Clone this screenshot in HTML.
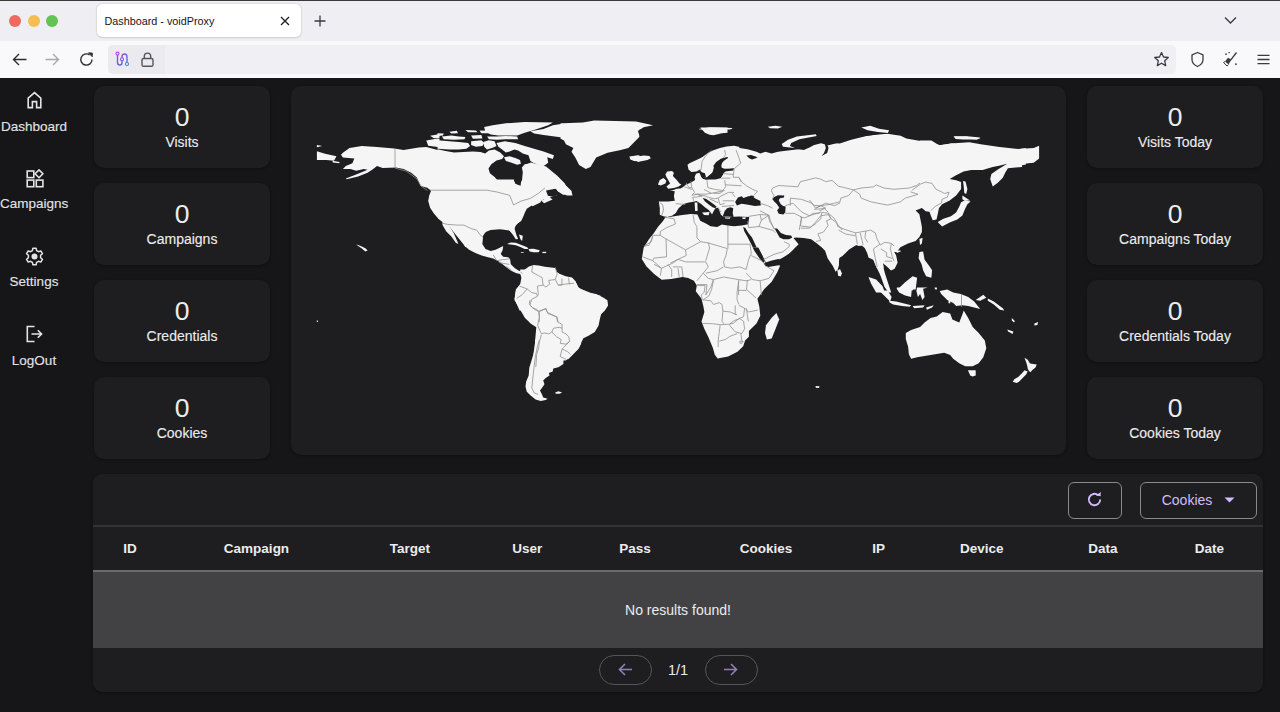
<!DOCTYPE html>
<html><head><meta charset="utf-8">
<style>
*{box-sizing:border-box;margin:0;padding:0}
html,body{width:1280px;height:712px;overflow:hidden;background:#161618;font-family:"Liberation Sans",sans-serif}
#chrome{position:absolute;left:0;top:0;width:1280px;height:78px;background:#f9f9fb}
#tabstrip{position:absolute;left:0;top:0;width:1280px;height:41px;background:#efeef3}
#topline{position:absolute;left:0;top:0;width:1280px;height:1px;background:#3a3a3a}
.dot{position:absolute;top:15px;width:12px;height:12px;border-radius:50%}
#tab{position:absolute;left:97px;top:4px;width:204px;height:33px;background:#fff;border-radius:5px;box-shadow:0 0 1.5px rgba(0,0,0,.3),0 1px 2px rgba(0,0,0,.08)}
#tab span{position:absolute;left:7.5px;top:11.2px;font-size:10.8px;line-height:13px;color:#15141a;white-space:nowrap}
#url{position:absolute;left:108px;top:45px;width:1068px;height:29px;background:#f0f0f4;border-radius:5px}
#urlbox{position:absolute;left:108px;top:45px;width:57px;height:29px;background:#ebebef;border-radius:5px 0 0 5px}
.ic{position:absolute}
.nav{-webkit-text-stroke:0.12px #e4e3e6;position:absolute;left:0;width:68px;height:16px;font-size:13.5px;line-height:16px;color:#e4e3e6;text-align:center;white-space:nowrap}
.card{position:absolute;width:176px;height:82px;background:#1e1e20;border-radius:10px;box-shadow:0 1px 3px rgba(0,0,0,.35);color:#ececee;text-align:center}
.card .n{position:absolute;left:0;right:0;top:102px;font-size:26.5px;line-height:30px}
.card .l{-webkit-text-stroke:0.12px #ececee;position:absolute;left:0;right:0;font-size:14px;line-height:16px;white-space:nowrap}
#map{position:absolute;left:291px;top:86px;width:775px;height:369px;background:#1e1e20;border-radius:10px;box-shadow:0 1px 3px rgba(0,0,0,.35)}
#tbl{position:absolute;left:93px;top:474px;width:1170px;height:218px;background:#1e1e20;border-radius:9px;box-shadow:0 1px 3px rgba(0,0,0,.35);overflow:hidden}
#div1{position:absolute;left:93px;top:525px;width:1170px;height:2px;background:#333237}
#div2{position:absolute;left:93px;top:570px;width:1170px;height:2px;background:#6b696e}
#row{position:absolute;left:93px;top:572px;width:1170px;height:76px;background:#424244}
.th{position:absolute;top:541px;height:16px;width:120px;margin-left:-60px;text-align:center;font-size:13.5px;line-height:16px;font-weight:bold;color:#ececee;white-space:nowrap}
.btn{position:absolute;border:1.3px solid #8b888f;border-radius:6px}
.pill{position:absolute;top:655px;width:53px;height:29.5px;border:1px solid #57545c;border-radius:15px}
</style></head><body>
<div id="chrome">
  <div id="tabstrip"></div>
  <div id="topline"></div>
  <div class="dot" style="left:9px;background:#ee6a5f"></div>
  <div class="dot" style="left:27.5px;background:#f5bd4f"></div>
  <div class="dot" style="left:46px;background:#61c454"></div>
  <div id="tab"><span>Dashboard - voidProxy</span>
    <svg class="ic" style="left:183px;top:12px" width="10" height="10" viewBox="0 0 10 10"><path d="M1 1L9 9M9 1L1 9" stroke="#1d1c22" stroke-width="1.3" fill="none"/></svg>
  </div>
  <svg class="ic" style="left:313px;top:14px" width="14" height="14" viewBox="0 0 14 14"><path d="M7 1.5V12.5M1.5 7H12.5" stroke="#3b3a40" stroke-width="1.3" fill="none"/></svg>
  <svg class="ic" style="left:1224px;top:15px" width="13" height="10" viewBox="0 0 13 10"><path d="M1 2.5L6.5 8L12 2.5" stroke="#3b3a40" stroke-width="1.3" fill="none"/></svg>
  <div id="url"></div>
  <div id="urlbox"></div>
  <svg class="ic" style="left:11px;top:51px" width="17" height="17" viewBox="0 0 17 17"><path d="M15.5 8.5H2.5M8 3L2.5 8.5L8 14" stroke="#2d2c33" stroke-width="1.4" fill="none"/></svg>
  <svg class="ic" style="left:44px;top:51px" width="17" height="17" viewBox="0 0 17 17"><path d="M1.5 8.5H14.5M9 3L14.5 8.5L9 14" stroke="#a9a8ad" stroke-width="1.4" fill="none"/></svg>
  <svg class="ic" style="left:78px;top:51px" width="17" height="17" viewBox="0 0 17 17"><path d="M14 8.5A5.6 5.6 0 1 1 11.6 3.9" stroke="#2d2c33" stroke-width="1.4" fill="none"/><path d="M10.5 1.8L14.3 2V5.8Z" fill="#2d2c33" stroke="#2d2c33" stroke-width="0.8"/></svg>
  <svg class="ic" style="left:114px;top:51px" width="16" height="17" viewBox="0 0 16 17"><defs><linearGradient id="gx" x1="0" y1="0" x2="1" y2="1"><stop offset="0" stop-color="#b83cdb"/><stop offset="1" stop-color="#3b7fd0"/></linearGradient></defs><path d="M3.5 3.5V11.5Q3.5 14 6 14Q8 14 8 11.5V6Q8 3 10.5 3Q13 3 13 6V11.5" stroke="url(#gx)" stroke-width="1.4" fill="none"/><circle cx="3.5" cy="2.6" r="1.5" fill="#fff" stroke="#b83cdb" stroke-width="1.1"/><circle cx="8" cy="8.3" r="1.5" fill="#fff" stroke="#7a55d5" stroke-width="1.1"/><circle cx="13" cy="13" r="1.5" fill="#fff" stroke="#3b7fd0" stroke-width="1.1"/></svg>
  <svg class="ic" style="left:140px;top:51px" width="15" height="17" viewBox="0 0 15 17"><rect x="2" y="7.5" width="11" height="7.8" rx="1.6" stroke="#55545a" stroke-width="1.4" fill="none"/><path d="M4.3 7.5V5.3A3.2 3.2 0 0 1 10.7 5.3V7.5" stroke="#55545a" stroke-width="1.4" fill="none"/></svg>
  <svg class="ic" style="left:1153px;top:51px" width="17" height="17" viewBox="0 0 17 17"><path d="M8.5 1.6L10.5 6L15.3 6.5L11.7 9.8L12.7 14.6L8.5 12.2L4.3 14.6L5.3 9.8L1.7 6.5L6.5 6Z" stroke="#3b3a40" stroke-width="1.3" stroke-linejoin="round" fill="none"/></svg>
  <svg class="ic" style="left:1189px;top:51px" width="17" height="17" viewBox="0 0 17 17"><path d="M8.5 1.5L3 3.8V8.5Q3 13 8.5 15.5Q14 13 14 8.5V3.8Z" stroke="#3b3a40" stroke-width="1.3" stroke-linejoin="round" fill="none"/></svg>
  <svg class="ic" style="left:1222px;top:51px" width="17" height="17" viewBox="0 0 17 17"><path d="M14.5 1.5L8.8 8.8" stroke="#3b3a40" stroke-width="1.3"/><path d="M9.5 8.5L6 6.8L3 10.5L6.5 13.5Z" fill="#3b3a40"/><path d="M3 10.5L1.5 11.5L5 15L6.5 13.5" stroke="#3b3a40" stroke-width="1" fill="none"/><path d="M3.2 3.2h1.6M4 2.4v1.6M6.5 1.6h1.2M7.1 1v1.2M13 13.2h1.8M13.9 12.3v1.8" stroke="#3b3a40" stroke-width="0.9"/></svg>
  <svg class="ic" style="left:1255px;top:51px" width="17" height="17" viewBox="0 0 17 17"><path d="M2.5 4.3H14.5M2.5 8.5H14.5M2.5 12.7H14.5" stroke="#3b3a40" stroke-width="1.3" fill="none"/></svg>
</div>
<div id="page" style="position:absolute;left:0;top:78px;width:1280px;height:634px;background:#161618"></div>

<svg class="ic" style="left:26px;top:91px" width="17" height="18" viewBox="0 0 17 18"><path d="M2.2 16.6V7.2L8.5 1.6L14.8 7.2V16.6H10.6V10.6H6.4V16.6Z" stroke="#e4e3e6" stroke-width="1.6" stroke-linejoin="miter" fill="none"/></svg>
<div class="nav" style="top:118.5px">Dashboard</div>
<svg class="ic" style="left:25px;top:169px" width="19" height="19" viewBox="0 0 19 19"><rect x="2.2" y="2" width="6.6" height="6.6" stroke="#e4e3e6" stroke-width="1.6" fill="none"/><rect x="2.2" y="11.1" width="6.6" height="6.6" stroke="#e4e3e6" stroke-width="1.6" fill="none"/><rect x="11.3" y="11.1" width="6.6" height="6.6" stroke="#e4e3e6" stroke-width="1.6" fill="none"/><path d="M14 0.9L17.9 4.8L14 8.7L10.1 4.8Z" stroke="#e4e3e6" stroke-width="1.6" fill="none"/></svg>
<div class="nav" style="top:196px">Campaigns</div>
<svg class="ic" style="left:25px;top:247px" width="19" height="19" viewBox="0 0 19 19"><path d="M7.9 1.2H11.1L11.6 3.6L13.5 4.7L15.8 3.9L17.4 6.7L15.6 8.3V10.7L17.4 12.3L15.8 15.1L13.5 14.3L11.6 15.4L11.1 17.8H7.9L7.4 15.4L5.5 14.3L3.2 15.1L1.6 12.3L3.4 10.7V8.3L1.6 6.7L3.2 3.9L5.5 4.7L7.4 3.6Z" stroke="#e4e3e6" stroke-width="1.5" stroke-linejoin="round" fill="none"/><circle cx="9.5" cy="9.5" r="3" fill="#e4e3e6"/></svg>
<div class="nav" style="top:274px">Settings</div>
<svg class="ic" style="left:25px;top:325px" width="19" height="18" viewBox="0 0 19 18"><path d="M9.5 1.5H2.3V16.5H9.5" stroke="#e4e3e6" stroke-width="1.6" fill="none"/><path d="M6.5 9H16.5M12.8 5.2L16.6 9L12.8 12.8" stroke="#e4e3e6" stroke-width="1.6" fill="none"/></svg>
<div class="nav" style="top:352.5px">LogOut</div>

<div class="card" style="left:94px;top:86px"><div class="n" style="top:16px">0</div><div class="l" style="top:48px">Visits</div></div>
<div class="card" style="left:94px;top:183px"><div class="n" style="top:16px">0</div><div class="l" style="top:48px">Campaigns</div></div>
<div class="card" style="left:94px;top:280px"><div class="n" style="top:16px">0</div><div class="l" style="top:48px">Credentials</div></div>
<div class="card" style="left:94px;top:377px"><div class="n" style="top:16px">0</div><div class="l" style="top:48px">Cookies</div></div>
<div class="card" style="left:1087px;top:86px"><div class="n" style="top:16px">0</div><div class="l" style="top:48px">Visits Today</div></div>
<div class="card" style="left:1087px;top:183px"><div class="n" style="top:16px">0</div><div class="l" style="top:48px">Campaigns Today</div></div>
<div class="card" style="left:1087px;top:280px"><div class="n" style="top:16px">0</div><div class="l" style="top:48px">Credentials Today</div></div>
<div class="card" style="left:1087px;top:377px"><div class="n" style="top:16px">0</div><div class="l" style="top:48px">Cookies Today</div></div>

<div id="map"></div>
<div id="tbl"></div>
<div id="div1"></div>
<div class="btn" style="left:1067.5px;top:481.5px;width:54px;height:37px"></div>
<svg class="ic" style="left:1086px;top:491px" width="17" height="17" viewBox="0 0 17 17"><path d="M14.2 8.5A5.7 5.7 0 1 1 12.2 4.2" stroke="#d0bcff" stroke-width="1.9" fill="none"/><path d="M10 4.6L14.6 5.2L14.8 0.9Z" fill="#d0bcff"/></svg>
<div class="btn" style="left:1140px;top:481.5px;width:116.5px;height:37px"></div>
<div style="position:absolute;left:1160px;top:492px;width:54px;text-align:center;font-size:14px;line-height:16px;color:#d0bcff;white-space:nowrap">Cookies</div>
<svg class="ic" style="left:1224px;top:497px" width="11" height="6" viewBox="0 0 11 6"><path d="M0.5 0.5H10.5L5.5 5.5Z" fill="#d0bcff"/></svg>
<div class="th" style="left:130px">ID</div>
<div class="th" style="left:256.5px">Campaign</div>
<div class="th" style="left:410px">Target</div>
<div class="th" style="left:527.3px">User</div>
<div class="th" style="left:635px">Pass</div>
<div class="th" style="left:766px">Cookies</div>
<div class="th" style="left:878.7px">IP</div>
<div class="th" style="left:981.8px">Device</div>
<div class="th" style="left:1102.8px">Data</div>
<div class="th" style="left:1209.5px">Date</div>
<div id="div2"></div>
<div id="row"></div>
<div style="position:absolute;left:578px;top:602px;width:200px;text-align:center;font-size:14px;line-height:16px;color:#ececee;white-space:nowrap">No results found!</div>
<div class="pill" style="left:599px"></div>
<svg class="ic" style="left:617px;top:661px" width="17" height="17" viewBox="0 0 17 17"><path d="M15 8.5H2.5M8 3L2.5 8.5L8 14" stroke="#8e80b3" stroke-width="1.6" fill="none"/></svg>
<div style="position:absolute;left:648px;top:662px;width:60px;text-align:center;font-size:14.5px;line-height:16px;color:#ececee;white-space:nowrap">1/1</div>
<div class="pill" style="left:704.5px"></div>
<svg class="ic" style="left:722px;top:661px" width="17" height="17" viewBox="0 0 17 17"><path d="M2 8.5H14.5M9 3L14.5 8.5L9 14" stroke="#8e80b3" stroke-width="1.6" fill="none"/></svg>
<!--MAP--><svg id="worldsvg" width="1280" height="712" viewBox="0 0 1280 712" style="position:absolute;left:0;top:0"><g fill="#f5f5f5"><path d="M316.9 151.2 325.1 153.7 336.5 156.2 334.0 160.7 326.4 160.0 316.9 160.0Z"/><path d="M316.9 145.0 322.1 146.1 316.9 147.3Z"/><path d="M332.5 160.7 339.7 161.9 339.1 163.2 332.9 162.4Z"/><path d="M342.9 152.8 349.5 148.0 361.9 146.1 377.0 147.1 394.1 148.6 403.6 149.9 418.7 147.6 426.3 147.1 437.7 149.9 449.1 151.8 460.5 150.9 471.8 151.8 483.2 150.9 492.7 152.8 502.2 152.2 513.5 154.1 528.7 156.5 545.0 157.5 545.0 199.2 538.2 201.1 532.5 204.9 526.8 208.7 524.9 212.5 523.0 217.2 521.1 221.0 517.3 223.8 514.1 227.6 513.5 231.4 516.4 238.1 517.7 239.0 513.5 233.3 509.7 230.5 502.2 229.5 492.7 228.6 487.0 230.5 483.2 235.2 482.3 242.8 481.3 247.0 465.2 247.0 462.3 240.9 456.7 232.4 451.0 225.7 448.7 225.0 453.8 233.3 457.6 241.9 458.2 243.8 454.8 239.0 450.0 231.4 445.3 225.4 444.3 223.5 438.6 219.1 433.9 213.4 430.1 207.7 428.2 201.1 429.2 195.4 431.1 190.7 427.3 187.8 420.6 185.9 416.8 177.4 411.2 172.7 403.6 168.9 396.0 167.4 382.7 167.9 377.0 166.0 373.2 168.9 367.6 172.7 358.1 176.5 346.7 179.3 345.8 178.4 356.2 174.6 367.6 169.8 363.8 168.9 356.2 170.8 350.5 168.9 342.9 168.9 345.8 166.0 352.4 163.2 354.3 158.4 342.9 157.5 341.0 154.7Z"/><path d="M426.3 140.4 437.7 138.5 449.1 139.5 448.1 145.2 437.7 147.1 428.2 145.7Z"/><path d="M443.4 143.3 456.7 140.4 471.8 142.3 475.6 147.1 468.0 150.9 456.7 152.8 445.3 149.9Z"/><path d="M430.1 135.7 441.5 133.8 449.1 134.7 445.3 137.6 433.9 138.2Z"/><path d="M449.1 136.6 464.2 134.7 471.8 136.6 466.1 139.5 452.9 139.5Z"/><path d="M466.1 130.0 475.6 131.0 471.8 133.2 466.1 132.9Z"/><path d="M471.8 140.4 481.3 137.6 492.7 138.5 496.5 144.2 487.0 147.1 475.6 146.1Z"/><path d="M483.2 127.2 496.5 124.3 513.5 122.4 545.0 121.5 545.0 132.9 528.7 134.7 521.1 138.5 505.9 137.6 494.6 135.7 485.1 132.9Z"/><path d="M496.5 142.3 505.9 140.4 517.3 144.2 528.7 148.0 536.3 149.9 545.0 151.8 545.0 161.3 534.4 159.4 523.0 155.6 513.5 157.5 505.9 155.6 500.3 149.9Z"/><path d="M356.2 244.2 360.0 245.7 361.9 246.6 365.7 248.5 367.6 250.4 365.3 251.4 361.9 248.5 358.1 246.1Z"/><path d="M316.8 320.4 317.9 320.4 317.9 321.9 316.8 321.9Z"/><path d="M522.1 277.9 545.0 268.4 545.0 375.0 529.6 375.0 531.5 365.1 534.4 353.7 535.3 338.6 536.3 327.2 530.6 323.4 524.9 317.7 518.3 306.4 514.5 298.8 516.4 290.2 521.1 283.6Z"/><path d="M545.0 125.3 556.4 123.4 582.9 122.4 594.3 120.5 636.0 121.5 653.1 125.3 643.6 127.2 637.9 131.0 639.8 136.6 634.1 142.3 628.4 148.0 620.8 149.9 607.6 152.8 596.2 157.5 590.5 167.0 585.8 168.9 579.1 165.1 575.3 157.5 571.5 151.8 573.4 148.0 565.9 144.2 564.0 140.4 556.4 136.6 545.0 135.7Z"/><path d="M545.0 151.8 549.7 152.8 553.5 157.5 550.7 163.2 545.0 165.1Z"/><path d="M629.4 156.5 637.9 155.2 649.3 156.0 650.2 159.4 643.6 161.7 634.1 160.9 630.3 159.4Z"/><path d="M698.6 129.1 709.9 127.2 732.7 128.1 727.0 131.9 715.6 132.9 711.8 134.7 704.2 132.9Z"/><path d="M768.7 126.8 782.0 126.2 780.1 128.7 770.6 128.7Z"/><path d="M544.1 167.0 552.6 174.6 560.2 182.1 565.9 187.8 567.7 190.7 560.2 189.7 556.4 195.4 550.7 197.3 544.1 201.1Z"/><path d="M559.2 186.9 565.9 185.9 571.5 191.6 572.5 195.4 566.8 195.4 562.1 192.6Z"/><path d="M785.8 149.9 768.7 152.8 763.0 157.5 753.5 156.5 745.9 153.7 742.2 149.0 732.7 146.1 719.4 147.1 708.0 150.9 698.6 157.5 691.0 162.2 688.1 166.0 690.0 171.7 695.7 173.6 699.5 170.8 702.3 174.6 704.2 178.4 698.6 177.4 696.7 182.1 691.0 183.1 685.3 185.0 681.5 187.8 677.7 187.8 673.9 188.8 668.2 191.6 675.8 195.4 673.9 201.1 670.1 203.0 662.5 203.0 659.7 206.8 660.6 214.4 666.3 216.3 672.0 215.9 666.3 222.0 658.7 225.7 653.1 233.3 647.4 240.9 643.6 247.7 785.8 247.7Z"/><path d="M666.3 172.7 672.0 170.8 675.8 176.5 677.7 182.1 680.5 186.9 673.9 187.8 668.2 188.8 670.1 184.0 668.2 179.3 664.4 177.4Z"/><path d="M658.7 180.2 664.4 178.4 666.3 183.1 662.5 185.0 657.8 185.0Z"/><path d="M442.5 219.4 522.1 219.4 515.8 225.1 514.6 228.8 516.5 235.2 518.1 239.0 515.8 239.2 512.7 234.5 508.9 230.1 501.9 228.8 496.9 229.5 490.6 230.1 484.2 232.6 482.3 237.7 482.3 244.0 485.5 249.1 490.6 251.0 495.6 249.7 500.7 247.2 503.2 245.9 502.6 250.3 500.7 254.1 503.2 256.7 508.2 257.3 510.1 259.2 510.8 264.2 514.6 268.0 518.4 270.6 522.1 271.8 528.5 266.8 533.5 264.9 538.6 265.5 544.9 266.8 551.2 267.4 555.0 268.0 557.5 273.1 561.3 275.6 566.4 277.5 572.7 279.4 576.5 283.2 579.0 288.2 585.3 290.8 591.7 293.3 600.5 295.8 600.5 310.5 519.6 310.5 515.8 302.1 515.2 295.8 515.8 289.5 520.9 284.5 522.1 279.4 520.9 274.3 515.8 273.1 510.8 270.6 505.7 266.8 499.4 261.7 493.1 258.5 488.0 257.3 481.7 255.4 475.4 252.9 469.1 249.7 465.3 246.5 460.2 240.2 455.2 233.9 450.1 227.6 447.6 225.1 448.8 228.8 453.9 236.4 457.7 242.7 458.3 244.0 455.8 242.7 451.4 236.4 446.3 231.4 442.5 225.1Z"/><path d="M507.0 244.0 510.8 242.5 515.8 242.7 522.1 245.3 527.2 247.2 528.5 249.1 524.7 249.1 520.9 247.2 515.8 245.3 510.8 244.6Z"/><path d="M528.5 249.1 533.5 248.8 539.8 250.3 538.6 252.2 533.5 252.2 529.7 251.6Z"/><path d="M520.9 252.2 524.0 252.2 523.4 253.1 520.9 253.1Z"/><path d="M542.4 251.8 546.2 251.8 546.2 253.1 542.4 253.1Z"/><path d="M519.0 234.5 522.8 235.8 522.1 240.9 520.3 239.0Z"/><path d="M520.2 269.4 555.6 269.4 555.6 271.3 559.4 273.8 565.7 276.3 572.0 277.6 575.8 281.4 577.1 286.4 580.9 289.0 588.5 292.7 596.1 294.0 603.6 297.8 607.4 300.3 608.1 305.4 604.9 310.4 601.1 314.2 599.8 319.3 598.6 325.6 594.8 331.9 588.5 335.7 583.4 338.2 580.9 343.3 578.4 348.4 573.3 353.4 569.5 357.2 565.7 360.5 532.9 360.5 534.1 352.1 536.0 340.8 537.3 330.7 537.9 325.6 531.6 323.1 525.3 318.0 522.7 313.0 519.0 306.7 514.5 300.3 515.2 294.0 516.4 289.0 520.2 283.9 521.5 277.6 520.2 273.8Z"/><path d="M535.0 339.4 581.1 339.4 581.1 343.8 578.6 348.8 573.5 353.9 568.5 359.0 563.4 360.2 563.4 364.0 558.4 367.2 553.3 368.4 552.7 371.6 548.9 372.9 549.5 375.4 545.7 377.9 543.2 380.4 544.5 384.2 541.9 388.0 540.0 390.6 541.9 394.3 543.2 397.5 547.6 398.8 545.7 400.0 540.7 400.9 535.6 399.4 530.6 395.6 526.8 391.8 525.5 386.8 526.1 381.7 528.7 375.4 529.3 367.8 531.2 361.5 533.1 355.2 534.3 348.8 535.0 342.5Z"/><path d="M555.2 392.4 558.4 391.2 562.1 392.4 559.6 393.7 555.8 393.7Z"/><path d="M785.0 143.3 792.6 138.5 804.0 135.7 816.3 134.4 815.3 137.0 804.0 140.1 796.4 143.3 790.7 147.1 785.0 148.0Z"/><path d="M784.1 149.9 796.4 149.0 804.0 149.9 813.4 145.2 821.0 143.3 828.6 145.2 836.2 143.3 845.7 140.4 860.8 136.6 876.0 134.7 887.4 133.8 900.6 135.7 906.3 138.5 917.7 140.4 929.1 142.3 940.5 145.2 951.8 143.3 963.2 145.2 974.6 146.1 985.9 147.1 997.3 149.0 1012.5 149.9 1025.8 148.0 1025.8 165.1 1012.5 167.0 1007.7 164.1 993.5 167.0 989.7 168.9 982.2 170.8 967.0 171.7 959.4 174.6 951.8 178.4 955.6 180.2 961.3 180.2 963.2 184.0 962.3 193.5 955.6 201.1 949.9 204.9 946.1 201.1 940.5 204.9 931.0 208.7 934.8 210.6 936.7 218.2 932.9 220.1 930.0 215.3 925.3 206.8 917.7 210.6 915.8 212.5 921.5 214.4 919.6 218.2 923.4 223.8 923.4 229.5 921.5 237.1 917.7 242.8 913.9 247.7 784.1 247.7Z"/><path d="M861.8 127.2 870.3 125.6 879.8 129.1 889.3 131.0 883.6 132.9 874.1 131.0 864.6 130.0Z"/><path d="M953.7 136.6 967.0 136.3 980.3 137.6 976.5 139.5 963.2 139.5 955.6 138.9Z"/><path d="M989.7 168.9 999.2 166.0 1007.7 164.1 1004.9 170.8 999.2 178.4 993.5 185.9 991.6 180.2 990.7 174.6Z"/><path d="M963.2 180.2 967.0 184.0 967.9 191.6 965.1 195.4 963.2 187.8Z"/><path d="M961.3 204.9 967.0 201.1 969.8 203.0 963.2 214.4 955.6 220.1 946.1 222.0 940.5 225.7 938.6 223.8 944.2 219.1 953.7 215.3 959.4 210.6Z"/><path d="M963.2 197.3 969.8 201.1 967.0 204.9 962.3 203.0Z"/><path d="M919.6 239.0 922.4 238.1 921.5 244.7 918.6 244.7Z"/><path d="M644.6 239.1 643.7 247.6 641.8 259.0 646.5 266.5 654.1 274.1 661.7 279.8 671.2 278.9 682.6 277.0 688.2 277.9 693.9 280.8 696.8 285.5 695.8 291.2 701.5 298.8 703.4 306.4 704.4 312.0 701.5 321.5 704.4 329.1 708.2 336.7 712.9 348.1 714.8 354.7 717.6 358.5 728.1 356.6 737.5 351.8 743.2 346.2 745.1 340.5 748.9 336.7 748.9 331.0 756.5 323.4 760.3 315.8 759.3 306.4 757.4 298.8 764.1 289.3 771.7 281.7 777.3 272.2 780.2 265.6 771.7 264.6 766.0 263.7 762.2 257.1 756.5 247.6 752.7 241.9 750.8 239.1Z"/><path d="M753.6 239.1 798.2 239.1 796.3 245.7 788.7 253.3 779.2 259.0 769.8 262.7 766.0 262.7 762.2 255.2 756.5 247.6Z"/><path d="M766.0 325.3 771.7 317.7 776.4 313.0 779.2 319.6 775.5 329.1 771.7 338.6 766.9 339.5 765.0 332.9Z"/><path d="M817.2 239.1 860.8 239.1 860.8 245.7 847.5 249.5 839.9 257.1 838.0 264.6 834.2 272.2 830.4 266.5 826.6 257.1 822.8 249.5Z"/><path d="M838.0 270.3 840.9 269.4 842.7 275.1 839.9 277.0 838.0 274.1Z"/><path d="M779.4 199.4 936.7 199.4 929.1 205.1 921.5 207.6 915.9 211.4 920.3 213.9 919.0 219.0 922.8 226.5 921.5 232.9 916.5 237.9 911.4 241.7 905.1 244.2 898.8 245.5 893.7 248.0 891.2 250.6 893.7 254.3 897.5 259.4 896.3 265.7 891.2 270.8 887.4 268.2 884.9 263.2 881.1 260.7 879.8 265.7 882.4 273.3 884.9 280.9 887.4 287.2 882.4 282.1 878.6 275.8 876.1 268.2 873.5 260.7 868.5 256.9 865.9 251.8 862.1 246.8 855.8 248.0 850.8 250.6 844.5 255.6 839.4 258.1 838.8 268.2 834.3 273.3 830.6 265.7 826.8 256.9 823.0 248.0 817.9 243.0 811.6 239.2 805.3 237.9 801.5 237.9 792.6 236.7 786.3 234.8 779.4 231.6Z"/><path d="M779.4 236.7 785.1 236.7 792.6 239.2 797.7 244.2 795.2 249.3 790.1 253.1 783.8 256.9 779.4 259.4Z"/><path d="M837.5 270.8 840.0 268.9 841.9 273.3 840.7 276.5 838.1 275.8Z"/><path d="M895.6 248.0 899.4 247.4 900.1 250.6 897.5 251.8Z"/><path d="M919.0 239.2 922.2 237.9 921.5 244.2 919.7 244.9Z"/><path d="M919.0 253.1 922.8 251.8 924.1 258.1 927.9 263.2 930.4 268.2 931.7 275.8 929.1 277.1 925.3 272.0 921.5 265.7 919.7 259.4Z"/><path d="M868.5 277.1 876.1 279.6 882.4 285.9 884.9 290.5 876.1 290.5 871.0 283.4Z"/><path d="M898.8 290.5 903.9 283.4 911.4 277.1 916.5 278.4 914.0 285.9 912.7 290.5Z"/><path d="M869.0 278.3 875.0 279.0 881.0 283.5 887.1 289.5 891.6 297.1 890.1 301.6 885.6 297.1 879.5 291.0 873.5 285.0Z"/><path d="M875.0 269.2 879.5 269.2 882.5 276.0 887.1 283.5 887.1 286.5 884.0 285.0 879.5 279.0 876.5 273.0Z"/><path d="M889.3 300.8 896.1 301.6 905.1 303.8 911.1 305.3 909.6 306.8 902.1 306.1 893.1 304.6 889.3 302.3Z"/><path d="M912.6 306.1 924.6 305.3 923.1 307.6 914.1 308.3Z"/><path d="M926.1 307.6 933.7 305.3 932.1 307.6 926.9 309.8Z"/><path d="M896.8 285.0 905.1 282.0 911.1 277.5 917.1 276.0 917.9 280.5 914.1 283.5 911.9 288.0 911.1 297.1 905.1 295.6 899.1 292.5 896.8 288.8Z"/><path d="M917.1 286.5 923.1 285.8 929.1 285.8 926.1 288.0 923.1 288.8 924.6 297.1 922.4 300.1 920.1 294.0 917.9 297.1 916.4 291.0Z"/><path d="M923.1 269.2 932.1 269.2 932.1 277.5 926.1 276.0 923.1 273.0Z"/><path d="M939.7 291.0 947.2 289.5 953.2 292.5 960.7 294.0 968.2 297.1 974.2 301.6 980.2 309.1 974.2 307.6 968.2 306.1 962.2 305.3 956.2 306.1 953.2 303.1 947.2 300.1 944.2 297.1 941.2 294.0Z"/><path d="M948.7 300.1 950.5 300.1 950.2 303.4 948.4 303.1Z"/><path d="M934.4 285.0 936.7 285.0 937.0 289.5 934.9 289.2Z"/><path d="M987.8 298.6 993.8 301.6 1002.8 308.3 1004.3 310.6 999.8 309.8 993.8 304.6 987.8 300.8Z"/><path d="M975.7 300.1 983.3 294.8 986.3 297.8 980.2 300.8Z"/><path d="M1011.8 318.1 1014.8 321.1 1014.1 322.6 1011.8 320.4Z"/><path d="M1007.3 329.4 1013.3 331.6 1012.6 333.9 1008.1 331.6Z"/><path d="M1034.4 323.4 1038.1 321.9 1037.4 324.9 1034.4 325.6Z"/><path d="M905.8 333.1 911.1 330.1 920.1 327.1 924.6 322.6 930.6 318.1 936.7 316.6 942.7 312.1 950.2 313.6 952.4 319.6 959.2 322.6 962.2 315.1 963.7 310.6 968.2 318.1 972.7 327.1 978.7 333.1 984.8 340.6 986.3 348.2 983.3 357.2 978.7 363.2 972.7 366.2 965.2 366.2 959.2 363.2 953.2 358.7 950.2 354.9 944.2 352.7 935.2 354.2 926.1 355.7 917.1 357.2 911.1 358.7 908.9 354.2 908.1 346.7 905.8 339.1Z"/><path d="M1024.5 357.7 1027.7 359.7 1030.0 363.6 1036.7 364.4 1035.5 367.5 1032.4 369.9 1030.4 372.3 1028.8 370.7 1027.7 368.7 1027.3 366.0 1026.1 362.0Z"/><path d="M1024.5 370.3 1027.7 371.5 1026.1 374.6 1022.9 377.8 1019.0 381.7 1016.6 382.9 1012.7 381.7 1014.3 379.3 1018.2 377.0 1022.2 373.0Z"/><path d="M967.9 370.3 975.7 370.3 975.7 375.4 972.6 376.6 970.2 375.4Z"/><path d="M920.0 140.4 931.4 140.4 939.0 145.2 954.1 143.3 969.3 142.3 980.7 144.2 999.6 147.1 1018.6 149.0 1033.7 148.0 1039.1 145.7 1039.1 158.4 1033.7 162.8 1026.2 163.6 1018.6 166.6 1011.0 168.1 1007.2 163.6 1003.4 166.0 995.8 167.4 990.1 170.8 982.6 169.8 973.1 169.8 965.5 171.7 957.9 174.6 950.3 178.4 920.0 178.4Z"/><path d="M990.1 170.8 995.8 167.4 1007.2 163.6 1003.4 170.8 1000.6 176.5 994.9 185.9 991.7 183.1 990.1 176.5Z"/><path d="M953.2 136.3 967.4 136.6 969.3 138.5 957.9 138.5Z"/><path d="M971.2 137.6 980.7 138.2 976.9 139.5 971.2 138.9Z"/></g><g fill="#1e1e20"><path d="M487.9 167.0 491.7 162.2 500.3 159.4 509.7 157.5 515.4 154.7 521.1 157.5 523.0 165.1 521.1 172.7 523.0 178.4 519.2 185.0 514.5 182.1 513.5 177.4 505.9 175.5 494.6 172.7 488.9 170.8Z"/><path d="M666.3 215.9 675.8 207.7 683.4 204.5 689.1 202.6 694.8 202.2 696.7 203.9 694.8 207.7 697.6 212.5 703.3 214.4 706.1 213.4 709.9 216.3 711.8 220.1 715.6 218.2 719.4 215.3 723.2 212.5 727.0 210.6 729.8 214.4 732.7 216.3 736.5 215.3 742.2 217.2 748.8 217.2 749.7 223.8 744.1 225.7 734.6 225.7 725.1 223.8 717.5 226.7 709.9 225.7 700.5 221.0 692.9 218.2 685.3 215.9 677.7 215.3 670.1 217.2Z"/><path d="M704.2 198.3 709.9 201.1 715.6 206.8 717.5 210.6 714.7 210.6 708.0 204.9 703.3 200.2Z"/><path d="M721.3 210.6 727.0 206.8 729.8 210.6 727.9 215.3 723.2 215.3Z"/><path d="M706.1 178.4 709.9 174.6 713.7 168.9 719.4 162.2 725.1 157.5 727.0 161.3 723.2 167.0 727.0 168.9 732.7 169.8 734.6 172.7 727.0 174.6 719.4 177.4 713.7 179.3 708.0 180.2Z"/><path d="M747.8 155.6 755.4 157.5 761.1 159.4 757.3 162.2 751.6 160.3Z"/></g><g fill="#f5f5f5"><path d="M694.8 195.4 700.5 197.3 704.2 201.1 708.0 206.8 713.7 210.6 711.8 214.4 708.0 213.4 704.2 210.6 700.5 206.8 696.7 201.1Z"/><path d="M693.8 203.0 697.6 203.0 697.6 212.5 694.8 211.5Z"/><path d="M704.2 213.4 709.9 214.4 708.0 217.2 704.2 216.3Z"/></g><g fill="#f5f5f5"><path d="M700.0 227.9 750.6 227.9 793.5 238.0 860.0 244.3 860.0 227.9 700.0 227.9Z"/></g><g fill="#1e1e20"><path d="M734.1 203.9 736.7 198.8 740.4 195.7 744.2 197.0 748.7 199.5 750.6 197.0 755.6 195.7 753.1 199.5 758.1 202.0 761.3 204.5 759.4 206.2 751.8 205.8 744.2 203.9 737.9 205.8Z"/><path d="M772.7 198.2 777.1 195.7 783.4 195.7 784.7 197.6 780.9 200.1 782.1 203.9 785.9 206.4 785.3 214.0 780.9 214.6 777.1 212.1 775.8 206.4 774.6 201.4Z"/><path d="M746.8 233.0 748.7 233.6 753.1 240.6 758.1 246.9 761.9 254.5 764.5 262.0 763.2 262.7 759.4 258.2 754.3 250.7 750.6 243.1 747.4 236.8Z"/><path d="M763.8 263.3 770.8 260.8 778.4 258.9 780.9 264.6 775.8 265.8 768.2 267.1 765.1 265.8Z"/><path d="M774.6 228.5 777.1 228.5 780.9 233.0 785.9 234.9 791.0 235.5 792.3 237.4 789.1 239.3 783.4 239.3 779.6 237.4 777.1 233.0Z"/><path d="M780.9 264.6 788.5 254.5 794.8 248.1 798.6 244.3 793.5 238.0 796.1 237.4 803.6 238.0 811.2 239.3 816.3 243.1 821.3 246.9 825.1 250.7 827.6 258.2 832.7 265.8 836.5 273.4 839.0 265.8 840.3 258.2 849.1 249.4 855.5 245.6 860.0 244.3 860.0 280.5 775.8 280.5 779.6 270.9Z"/></g><g fill="#f5f5f5"><path d="M837.1 269.6 840.3 269.0 842.2 274.7 840.3 277.2 837.8 275.9Z"/></g><g fill="#1e1e20"><path d="M639.5 129.5 760.5 129.5 760.5 197.0 639.5 197.0Z"/></g><g fill="#f5f5f5"><path d="M700.2 127.5 727.5 127.5 727.5 132.8 721.9 133.3 713.4 135.2 709.6 134.7 704.9 132.8Z"/><path d="M637.5 156.4 643.8 155.4 649.4 155.9 650.8 158.2 647.5 160.1 637.5 162.0Z"/><path d="M773.8 152.6 755.8 150.2 748.2 148.8 739.8 146.9 734.1 145.8 726.6 146.5 720.0 147.9 713.4 150.2 707.8 153.1 702.1 157.3 696.5 160.1 689.9 162.9 687.5 164.8 688.5 169.5 691.3 171.9 696.5 171.4 700.2 169.5 702.1 173.3 704.9 177.5 707.8 177.1 711.5 174.2 714.4 169.5 713.4 165.8 716.2 162.0 720.9 158.7 728.0 157.3 724.7 160.1 721.9 162.9 720.9 167.6 724.7 169.5 734.1 168.6 733.2 170.5 724.7 171.4 722.8 174.2 720.9 177.1 715.3 178.9 710.6 178.9 705.9 179.4 703.1 178.9 701.2 177.1 700.2 174.2 699.3 172.8 696.0 173.8 694.6 177.1 695.1 179.9 690.8 182.7 686.1 184.6 682.4 187.4 680.5 188.4 676.7 188.8 672.9 190.2 668.2 191.2 671.1 194.0 673.9 199.4 773.8 199.4Z"/><path d="M665.4 174.2 667.3 171.4 672.0 170.9 673.9 172.8 672.9 176.1 676.7 179.9 679.5 183.6 681.4 184.6 678.6 186.5 673.9 187.9 668.2 188.8 666.4 186.5 670.1 183.6 668.2 179.9 666.4 177.1Z"/><path d="M657.9 184.6 659.8 179.9 663.5 178.0 666.4 180.8 665.4 183.6 660.7 185.5Z"/></g><g fill="#1e1e20"><path d="M746.4 155.4 751.1 154.9 757.6 157.3 755.8 158.2 752.0 159.6 749.2 158.2Z"/></g><g fill="#1e1e20"><path d="M727.5 157.1 721.9 158.5 717.2 162.2 714.4 166.0 713.4 169.3 712.5 172.6 707.8 176.4 704.9 179.4 707.8 179.6 715.3 179.4 720.5 178.2 722.4 175.4 724.2 172.6 726.6 170.2 733.2 169.3 734.1 168.4 724.7 168.8 721.9 167.9 720.9 165.1 722.8 161.3 728.0 158.0Z"/><path d="M700.2 171.8 704.9 173.3 706.1 177.5 702.9 177.0 701.2 174.0Z"/></g><g fill="#f5f5f5"><path d="M654.1 191.3 760.5 191.3 760.5 247.4 654.1 247.4Z"/></g><g fill="#1e1e20"><path d="M668.2 190.4 674.8 191.3 673.9 196.0 674.8 200.7 668.2 201.6 658.8 201.6 659.8 208.2 659.8 214.8 663.5 216.2 667.3 216.9 665.4 217.6 662.6 221.4 657.9 227.1 654.1 232.7 649.4 238.4 643.8 247.4 639.5 247.4 639.5 190.4Z"/><path d="M667.3 216.9 672.0 215.8 675.8 212.9 678.6 208.2 683.3 204.0 688.9 202.4 693.6 201.8 696.5 200.9 701.2 204.0 704.9 207.3 708.7 210.1 711.1 212.9 712.0 214.6 713.2 212.0 715.3 208.2 718.1 207.8 719.5 211.1 720.9 214.8 722.8 216.2 729.4 217.2 734.1 216.7 738.8 216.5 743.5 216.7 749.2 216.9 748.2 224.2 741.6 225.4 734.1 226.3 727.5 225.4 721.9 224.4 717.2 227.1 710.6 226.3 705.9 223.5 700.2 220.7 697.4 214.6 690.8 214.1 682.4 215.0 675.8 216.0 668.2 217.3Z"/><path d="M702.6 197.9 705.9 198.8 709.6 201.2 713.4 204.0 716.7 206.8 715.3 208.2 712.5 207.3 708.7 204.5 704.9 201.2Z"/><path d="M722.8 216.2 724.7 211.1 727.1 208.2 730.4 207.3 733.2 208.2 732.7 212.9 733.6 216.9Z"/><path d="M735.1 202.1 737.9 197.4 741.6 196.2 743.5 198.1 748.2 196.2 752.9 196.8 755.8 198.8 760.5 200.9 760.5 205.6 754.8 206.1 748.2 204.7 741.6 203.7 736.9 205.6Z"/><path d="M743.1 227.1 745.4 228.0 748.2 232.7 752.0 237.4 756.7 247.4 752.9 247.4 747.3 236.5 744.5 231.8Z"/></g><g fill="#f5f5f5"><path d="M694.6 202.6 697.4 202.6 697.6 211.1 695.1 211.1Z"/><path d="M702.1 212.5 709.6 212.0 708.7 215.3 704.0 215.0Z"/><path d="M724.7 217.5 730.4 217.6 729.9 218.8 725.2 218.6Z"/><path d="M742.1 217.5 745.9 217.2 745.4 219.1 742.6 219.1Z"/></g><g fill="#1e1e20"><path d="M439.5 111.5 560.5 111.5 560.5 179.4 439.5 179.4Z"/></g><g fill="#f5f5f5"><path d="M437.5 149.2 445.6 151.1 454.1 152.5 463.5 152.0 472.9 151.5 480.5 152.0 485.2 153.4 488.9 150.6 494.6 149.6 500.2 152.5 504.0 156.2 502.1 159.1 496.5 160.5 491.3 164.2 488.5 168.5 489.9 173.2 494.6 176.9 498.4 181.4 437.5 181.4Z"/><path d="M521.9 181.4 522.8 172.2 521.9 167.5 524.7 164.2 530.4 163.3 535.1 164.7 538.8 168.5 543.5 170.4 546.4 168.5 551.1 172.2 553.9 176.0 555.8 181.4Z"/><path d="M496.5 143.1 504.9 141.2 515.3 143.1 524.7 145.9 534.1 148.7 543.5 151.5 553.9 155.3 552.9 159.1 547.3 157.2 548.2 162.8 541.6 167.5 537.9 164.7 533.2 162.8 530.4 160.9 528.5 155.3 522.8 153.4 518.1 150.6 514.4 149.6 509.6 151.5 505.9 152.5 502.1 149.6 498.4 146.8Z"/><path d="M504.0 157.2 509.6 156.2 515.3 158.1 520.0 160.0 520.9 163.8 517.2 164.7 511.5 162.8 505.9 160.9Z"/><path d="M484.2 127.1 492.7 125.2 505.9 123.3 524.7 121.9 552.9 122.4 548.2 125.2 534.1 129.9 524.7 132.7 517.2 135.5 507.8 135.5 498.4 135.5 490.8 134.6 485.2 131.8Z"/><path d="M530.4 131.3 543.5 128.9 552.9 125.2 562.5 123.8 562.5 137.4 554.8 136.5 543.5 135.1 534.1 133.6Z"/><path d="M437.5 133.2 443.8 133.6 442.8 135.5 437.5 136.0Z"/><path d="M449.4 131.8 456.9 130.8 457.9 133.2 451.3 133.6Z"/><path d="M441.9 136.5 451.3 135.5 458.8 136.5 465.4 136.9 464.5 139.3 454.1 139.8 443.8 139.3Z"/><path d="M465.4 129.9 475.8 130.4 477.6 132.2 468.2 132.2Z"/><path d="M471.1 135.5 481.4 135.1 482.4 138.4 472.9 138.8Z"/><path d="M479.5 130.4 487.1 130.8 488.9 133.2 481.4 133.2Z"/><path d="M437.5 140.2 449.4 141.2 458.8 142.1 468.2 143.1 470.1 145.9 466.4 148.7 458.8 149.6 449.4 149.6 437.5 148.7Z"/><path d="M471.1 141.2 481.4 140.2 484.2 143.1 482.4 145.9 475.8 146.8 471.1 144.9Z"/><path d="M483.3 142.1 488.9 140.2 494.6 141.2 496.5 145.9 492.7 147.8 487.1 149.6 484.2 146.8Z"/><path d="M487.1 136.5 496.5 136.5 505.9 136.0 517.2 136.5 518.1 139.3 505.9 139.3 496.5 139.8 488.9 139.3Z"/></g><g fill="#f5f5f5"><path d="M530.8 162.6 546.0 166.4 557.3 175.8 564.9 183.4 566.8 189.1 559.2 189.1 551.7 191.0 544.1 196.7 540.3 202.4 532.7 206.2 523.2 198.6 521.3 187.2 525.1 175.8 527.0 164.5Z"/></g><g fill="#1e1e20"><path d="M513.4 175.8 521.7 175.5 520.6 185.7 515.3 183.8Z"/><path d="M546.0 190.6 555.5 188.7 560.2 192.9 553.9 197.1 547.9 195.7Z"/></g><g fill="#f5f5f5"><path d="M557.3 185.3 564.9 184.4 571.6 191.0 570.6 194.8 563.0 194.8 557.3 191.0Z"/><path d="M541.2 200.5 549.8 197.6 552.6 199.5 544.1 203.3Z"/></g><g fill="#1e1e20"><path d="M859.2 179.2 1050.9 179.2 1050.9 287.6 859.2 287.6Z"/></g><g fill="#f5f5f5"><path d="M857.2 177.2 959.2 177.2 963.7 184.5 960.7 192.0 953.2 199.5 944.2 204.0 938.2 207.1 938.9 211.6 937.4 217.6 933.7 220.6 929.9 218.3 928.4 213.1 926.1 209.3 923.1 208.6 915.6 210.8 920.1 213.8 918.6 217.6 923.1 223.6 923.1 229.6 919.4 235.6 911.1 241.6 903.6 244.6 897.6 247.6 891.6 247.6 896.1 255.2 897.6 262.7 894.6 268.7 888.6 271.7 884.0 268.7 881.0 264.2 878.0 263.4 876.5 268.7 879.5 276.2 884.0 283.7 887.1 289.6 875.0 289.6 872.0 276.2 869.0 264.2 866.0 255.2 863.0 246.1 858.0 243.1Z"/><path d="M938.9 222.8 944.2 219.8 951.7 216.8 957.7 211.6 960.7 205.6 962.2 201.0 968.2 202.5 965.2 208.6 962.2 214.6 957.7 219.1 950.2 222.1 944.2 224.3 941.2 225.8Z"/><path d="M963.7 193.5 966.7 195.0 970.5 201.0 966.0 202.5 963.7 198.0Z"/><path d="M962.2 177.2 965.2 177.2 966.7 187.5 965.2 193.5 963.7 189.0Z"/><path d="M919.4 239.4 922.4 237.9 922.8 243.1 920.4 244.9Z"/><path d="M895.3 247.6 900.6 246.9 900.6 251.4 896.8 252.9Z"/><path d="M919.4 252.1 923.1 251.4 924.6 259.7 929.1 265.7 932.1 270.2 931.4 277.7 926.1 276.2 923.1 270.2 921.6 264.2 918.6 258.2Z"/><path d="M990.8 177.2 999.8 177.2 996.8 184.5 993.0 186.8Z"/><path d="M897.6 289.6 905.1 282.2 912.6 276.2 917.1 277.7 915.6 289.6Z"/><path d="M869.0 278.5 873.5 277.7 879.5 283.7 881.0 289.6 873.5 289.6Z"/></g><g fill="#1e1e20"><path d="M739.4 109.4 900.5 109.4 900.5 134.6 889.1 133.4 879.0 134.0 866.4 135.9 851.2 139.7 839.8 143.5 831.0 142.9 827.2 144.1 828.5 147.9 827.2 153.0 821.5 156.1 824.0 153.0 825.9 147.9 824.7 144.1 822.1 142.2 815.8 143.1 812.0 146.0 808.2 147.9 798.1 149.2 788.0 150.4 777.9 151.7 771.6 153.6 765.3 151.7 760.2 153.6 756.4 151.7 747.6 149.2 739.4 147.9Z"/></g><g fill="#f5f5f5"><path d="M781.7 144.1 788.0 139.7 796.9 136.5 815.8 134.3 816.7 135.9 799.4 139.3 791.2 142.9 789.9 146.0 795.0 147.9 783.0 146.7Z"/><path d="M767.8 126.8 775.4 125.8 782.3 126.7 777.9 128.5 770.3 128.3Z"/><path d="M861.3 127.4 870.2 125.8 879.0 128.7 889.1 130.2 887.9 133.0 877.8 132.1 867.6 130.2Z"/></g><g fill="#1e1e20"><path d="M950.5 178.6 958.4 174.0 963.6 170.7 981.9 170.1 989.7 167.5 995.0 166.2 1000.2 165.5 1008.0 163.6 1002.8 168.8 995.0 171.4 990.4 175.3 991.0 181.8 992.3 187.3 997.6 185.8 1002.8 181.8 1005.4 176.6 1007.4 171.4 1010.6 168.8 1023.7 164.9 1038.1 162.3 1045.9 162.3 1045.9 203.5 950.5 203.5 954.5 200.1 959.0 193.6 958.4 183.2Z"/></g><g fill="#f5f5f5"><path d="M1002.8 168.8 995.0 171.4 990.4 175.3 991.0 181.8 992.3 187.3 997.6 185.8 1002.8 181.8 1005.4 176.6 1007.4 171.4 1010.6 168.8 1008.7 162.9Z"/><path d="M962.0 181.2 964.9 179.9 966.9 188.4 968.8 196.2 970.1 205.5 966.9 205.5 963.6 194.9 962.0 187.1Z"/><path d="M963.7 193.5 966.2 194.9 970.5 201.4 967.5 205.5 964.3 198.8Z"/></g><g fill="#1e1e20"><path d="M859.4 159.4 1020.5 159.4 1020.5 250.5 859.4 250.5Z"/></g><g fill="#f5f5f5"><path d="M857.4 157.4 1022.0 157.4 1022.0 167.0 1007.9 168.2 1005.3 172.6 1002.8 177.7 997.8 182.7 992.7 186.5 990.2 179.0 991.4 173.9 997.8 169.5 1007.2 163.8 999.0 165.7 992.7 167.0 982.6 170.1 971.2 170.1 963.6 171.4 956.1 175.2 949.7 179.0 956.1 180.2 961.1 182.1 961.1 189.1 956.1 195.4 949.7 200.4 942.1 204.2 939.0 208.0 937.7 214.3 936.5 219.4 932.7 220.3 930.8 215.6 929.5 211.8 925.7 211.2 921.9 208.0 915.6 210.6 919.4 214.3 920.7 220.7 921.9 227.0 921.9 232.0 919.4 237.1 915.6 240.9 908.0 243.4 900.4 247.2 896.7 252.0 857.4 252.0Z"/><path d="M937.7 221.9 943.4 218.8 951.0 216.2 956.1 212.4 959.2 206.8 961.1 202.3 964.9 200.2 970.6 201.5 967.4 204.2 964.9 209.3 962.4 215.6 957.3 219.4 949.7 222.6 942.1 226.4Z"/><path d="M962.4 195.4 966.2 197.9 970.0 200.4 964.9 200.7 962.4 199.2Z"/><path d="M963.0 180.9 965.5 181.5 967.4 189.1 966.2 194.1 964.3 193.1 963.6 185.3Z"/><path d="M919.4 239.0 922.6 237.7 921.9 243.4 920.0 244.9Z"/></g><g fill="#1e1e20"><path d="M862.1 245.8 855.8 246.1 853.3 249.3 845.7 254.3 839.4 258.1 838.8 268.2 835.6 274.6 843.2 290.5 887.4 290.5 884.9 287.2 879.8 273.9 876.1 266.4 873.5 260.0 868.5 257.5 867.2 253.1 864.7 248.0Z"/><path d="M883.0 263.2 887.4 267.0 891.2 270.8 890.0 273.9 886.2 274.6 884.3 270.8Z"/></g><g fill="#f5f5f5"><path d="M837.5 270.8 840.0 268.9 841.9 273.3 840.7 276.5 838.1 275.8Z"/><path d="M868.5 277.1 876.1 279.6 882.4 285.9 884.9 292.5 876.1 292.5 871.0 283.4Z"/><path d="M876.1 266.4 879.8 273.9 884.9 287.2 888.7 292.5 891.2 292.5 887.4 280.9 884.9 273.3 883.0 265.7 881.1 260.7 873.5 260.0Z"/></g><g fill="#f5f5f5"><path d="M815.5 386.0 819.5 386.2 819.0 388.0 815.8 387.8Z"/></g><g fill="#f5f5f5"><path d="M770.4 193.6 787.5 193.6 787.5 216.0 770.4 216.0Z"/></g><g fill="#1e1e20"><path d="M772.3 199.0 774.2 197.1 778.0 195.2 784.3 195.5 784.0 197.4 779.9 198.3 778.7 200.2 780.6 204.0 783.1 205.9 785.6 206.5 785.3 212.2 783.4 214.4 778.7 213.8 777.1 210.3 779.3 207.8 776.8 204.0 774.2 201.5Z"/><path d="M749.0 196.6 750.9 195.5 754.3 195.9 753.1 197.4 749.6 197.5Z"/></g><path fill="none" stroke="#8f8f90" stroke-width="0.8" d="M664.1 217.0 674.2 218.9 675.4 224.0 666.6 227.7 660.3 231.5 660.3 235.3M660.3 235.3 652.7 235.3 651.4 241.7 645.1 245.4M652.7 236.6 648.9 245.4 643.8 246.1M660.3 235.3 665.3 238.5 685.6 249.9 700.7 241.7M666.0 238.5 666.6 256.8 654.0 258.1 652.7 260.6M693.1 215.1 694.4 222.7 696.9 226.5M696.9 226.5 696.9 237.9 700.7 241.7M700.7 241.7 708.3 242.9 727.3 248.6M727.9 225.2 727.9 248.6M727.9 244.2 750.0 244.2M685.6 249.9 686.2 255.6 678.0 259.3 670.4 263.1M708.3 242.9 709.6 248.0 705.8 260.6M678.0 259.3 685.6 261.9 694.4 261.9 705.8 261.9M727.3 248.6 726.0 255.6 723.5 261.9 724.7 266.9M724.7 266.9 731.1 268.2 739.9 266.9 746.2 269.5M750.0 244.2 751.3 253.0 748.7 259.3 746.2 269.5M751.3 255.6 761.4 260.6 765.2 264.4M765.2 265.7 774.0 270.7 769.0 278.3 760.1 280.8 752.5 279.6M746.2 273.2 752.5 279.6M642.6 256.8 652.7 260.6 661.5 268.2 660.3 275.8M654.0 264.4 661.5 268.2 672.9 263.1 678.0 259.3M667.9 264.4 671.7 269.5 671.7 277.0M672.9 266.9 681.8 266.9 683.0 277.0M678.0 268.2 679.2 277.0M705.8 261.9 708.3 266.9 703.2 273.2 696.9 280.8M705.8 273.2 717.1 270.7 723.5 266.9M703.2 273.2 708.3 278.3 713.4 279.6 723.5 277.0 731.1 278.3 738.6 279.6M738.6 279.6 746.2 280.8 751.3 279.6M713.4 279.6 710.8 287.1 705.8 295.0M738.6 280.8 738.6 295.0M760.1 280.8 761.4 295.0M696.9 284.6 707.0 284.6 705.8 295.0M747.5 221.4 748.7 227.7M748.7 227.7 758.9 226.5 761.4 220.2 769.0 215.1M758.9 226.5 772.8 230.3 775.3 232.8M763.9 259.3 774.0 254.3 782.9 251.8 789.2 246.7M784.1 241.7 789.2 244.2 789.2 246.7M748.7 216.4 760.1 214.5 769.0 215.1M769.0 215.1 770.2 220.2 774.0 229.0M760.1 214.5 761.4 220.2M696.6 285.6 705.1 285.6 704.1 292.2 701.3 295.1 702.2 298.8M713.5 280.0 711.6 289.4 708.8 296.0 703.2 299.8M702.2 299.8 710.7 300.7 713.5 304.5 719.2 302.6 722.0 304.5 722.9 311.1 730.5 312.0 736.1 314.8M738.9 280.0 738.0 285.6 737.1 292.2 737.1 299.8 738.9 304.5M747.4 280.0 746.5 289.4 755.9 297.9M738.0 290.4 746.5 290.4M738.9 305.4 744.6 308.2 748.4 312.0 757.8 310.1M735.2 305.4 735.2 313.9 737.1 314.8M744.6 308.2 743.6 316.7 738.9 318.6 733.3 323.3 729.5 324.2M722.9 311.1 722.0 321.4 723.9 323.8M702.2 323.3 713.5 323.8 720.1 324.7 729.5 324.2M746.5 308.2 747.4 315.8 748.4 321.4M729.5 324.2 734.2 320.5 739.9 318.6 743.6 321.4M743.6 321.4 744.6 328.9 741.8 333.6M729.5 325.2 735.2 331.8 741.8 333.6M720.1 325.2 719.2 332.7 718.2 340.2M719.2 341.2 725.8 339.3 729.5 336.5 737.1 333.6M740.8 333.6 741.8 340.2 743.6 342.1M718.2 340.2 718.2 347.0M739.9 341.2 742.2 341.0 742.2 343.2 739.9 343.2 739.9 341.2M711.5 150.0 705.9 155.6 702.1 161.3 701.2 168.8 700.2 171.6M724.7 150.0 725.6 154.7 722.8 158.5M736.0 150.0 738.8 157.5 740.7 163.2 734.1 168.8M734.1 168.8 733.2 177.3 738.8 177.3 741.6 182.0M722.8 173.5 733.2 174.5M720.9 178.2 730.4 178.2M706.8 179.2 707.8 187.6M724.7 180.1 725.6 186.7 722.8 190.5M707.8 187.6 715.3 189.5 722.8 190.5M690.8 181.1 691.8 187.6 694.6 192.4 691.8 195.2M686.1 182.9 688.9 187.6 691.8 187.6M684.2 186.7 691.8 189.5M704.0 189.5 707.8 191.4 711.5 193.3 705.9 194.2 700.2 194.2 694.6 194.2M711.5 193.3 720.9 191.4 724.7 190.5M713.4 193.3 720.0 193.3 722.8 191.4M691.8 195.2 698.4 194.2 702.1 196.1 696.5 197.1 692.7 197.1M692.7 197.1 693.6 200.8M675.8 203.6 685.2 204.6M659.8 202.7 662.6 204.6 663.5 210.2 661.6 215.9M698.4 195.2 705.9 196.1 707.8 197.1M707.8 197.1 714.4 198.9 718.1 198.0 720.9 196.1 728.5 192.4 734.1 192.4M709.6 198.9 718.1 202.7M718.1 198.0 720.0 204.6 724.7 203.6M722.8 200.8 734.1 200.8M721.9 206.5 734.1 205.5M718.1 207.4 720.9 212.1M725.6 184.8 741.6 185.8M738.8 177.3 741.6 182.0 746.4 185.8M746.4 185.8 752.9 189.5 757.6 191.4 753.9 195.2M732.2 193.3 735.1 197.1M771.4 190.6 772.6 188.0 779.0 185.5 797.9 186.8 800.4 181.7 815.6 177.9 820.7 179.2 825.7 181.7 832.0 180.4 838.4 186.1 845.9 188.0 853.5 189.9M853.5 189.9 861.1 188.0 873.7 186.8 876.3 184.9 883.9 188.0 894.0 189.3 909.1 188.0 916.7 185.5 920.0 183.0M853.5 189.9 859.8 194.3 861.1 198.1 871.2 201.9 887.6 205.1 900.3 201.9 905.3 198.1 918.0 194.3 910.4 191.8M853.5 189.9 848.5 195.6 840.9 198.1 839.6 203.2 834.6 205.7M771.4 190.6 773.9 195.6 772.6 199.4M790.3 198.1 801.7 199.4 811.8 203.2 815.6 208.2 825.7 203.2 834.6 205.7M790.3 198.1 790.3 205.7M785.3 205.7 792.9 203.2 801.7 212.0 809.3 215.8 813.1 213.3 819.4 213.3M785.3 213.3 794.1 213.3 801.7 217.1M815.6 208.2 820.7 205.7 825.7 208.2 819.4 210.8M801.7 217.1 800.4 225.9 810.6 227.2 815.6 222.1 820.7 215.8 828.2 214.6M828.2 214.6 830.8 218.4 835.8 222.1 842.1 230.0M760.0 203.2 767.6 205.7 772.6 208.2M760.0 210.8 767.6 214.6 770.1 222.1 775.2 230.0M801.7 217.1 799.2 230.0M828.2 213.2 831.1 218.8 826.4 220.7 828.2 225.4 823.5 232.0 817.9 233.9 820.7 240.5 816.0 241.4M800.0 216.9 804.7 217.9 811.3 215.1 820.7 212.2 828.2 213.2M800.9 228.2 809.4 228.2 816.0 223.5 820.7 218.8 821.6 213.2M828.2 213.2 833.9 217.9 836.7 222.6 837.6 226.4 844.2 229.2 855.5 232.9 860.2 232.0 865.9 231.1 870.6 230.1 875.3 232.9 877.2 239.5 880.0 244.2M838.6 230.1 845.2 233.9 855.5 235.8M855.5 232.9 856.5 239.5 857.4 244.2M860.2 232.9 862.1 240.5 863.1 245.2M865.9 231.1 864.9 237.6 867.8 242.4M880.0 244.2 873.4 248.9 875.3 258.4 877.2 267.0M880.0 245.2 884.7 242.4 891.3 243.3 890.4 248.9 892.2 256.5 894.1 261.2M880.9 248.9 886.6 252.7 886.6 256.5 892.2 258.4M884.7 261.2 892.2 261.2M891.3 243.3 894.1 246.1M809.4 200.0 814.1 205.6 821.6 205.6 828.2 204.7 839.5 201.9M814.1 209.4 824.5 208.5 828.2 212.2M961.5 294.0 961.5 307.0M395.0 148.5 395.0 168.0M395.0 168.0 400.0 169.5 406.0 171.0 411.0 174.5 417.0 179.0 421.0 186.0 427.5 190.5M430.0 190.2 487.0 190.2 497.0 192.0 509.7 195.4 513.5 204.9 521.0 201.1 530.6 198.3 538.2 193.5 545.0 187.8M442.5 223.2 447.6 224.4 457.7 225.1 464.0 225.1 471.6 228.8 476.7 230.1 480.4 235.2 483.0 237.0M520.5 271.9 522.4 273.8M532.7 265.4 531.8 271.9 538.4 275.7 542.1 277.6 543.1 285.1 537.4 286.1 538.4 295.5M543.1 285.1 545.9 287.0 549.6 284.2 548.7 280.4 555.3 279.5 558.1 285.1 561.9 285.1M555.3 267.2 557.2 273.8 555.3 279.5M561.9 278.5 561.9 285.1M568.5 277.6 569.4 284.2M558.1 285.1 564.7 284.2 574.1 283.2M519.5 286.1 527.1 288.9 531.8 292.6 536.5 293.6M516.7 298.3 522.4 294.5 527.1 288.9M536.5 293.6 537.4 296.4 531.8 299.2 529.9 304.9 534.6 309.6 539.3 311.5 545.9 308.6 547.8 313.4 557.2 317.1 558.1 322.0M539.3 311.5 539.3 322.0M493.2 255.0 496.9 260.6 502.6 259.7 510.1 258.8M498.8 262.5 509.2 264.4M506.4 266.3 511.1 270.1M530.1 300.0 529.2 303.8 532.0 307.5 536.7 309.4 538.6 312.2 539.5 316.9 537.6 325.4M538.6 311.3 546.1 308.5 547.1 312.2 556.5 316.9 557.4 321.6 562.1 324.5 562.1 332.0M537.6 325.4 541.4 333.9 544.2 332.9 548.9 333.9 551.8 332.0M551.8 332.0 553.6 328.2 559.3 327.3 562.1 328.2M562.1 332.0 565.9 333.9 568.7 336.7 569.6 341.4 565.9 344.2 560.2 343.3 561.2 339.5 556.5 336.7 551.8 332.0M569.6 341.4 564.0 347.1 562.1 348.9M562.1 348.9 567.8 351.8 570.6 354.6M562.1 348.9 560.2 356.5 565.9 359.3M541.4 334.8 539.5 341.4 538.6 348.0 536.7 354.6 535.8 367.0M539.4 340.0 537.5 346.3 535.6 355.2 534.3 365.3 533.1 375.4 531.8 388.0 534.3 393.1 538.1 394.3M911.8 190.3 920.7 184.0 925.7 182.1 932.0 183.4 935.8 189.1 942.1 192.2 944.7 193.5 949.1 192.2 947.2 197.3 942.1 199.2 941.5 203.0M941.5 203.0 935.8 206.1 930.8 210.6"/></svg><!--/MAP-->
</body></html>
